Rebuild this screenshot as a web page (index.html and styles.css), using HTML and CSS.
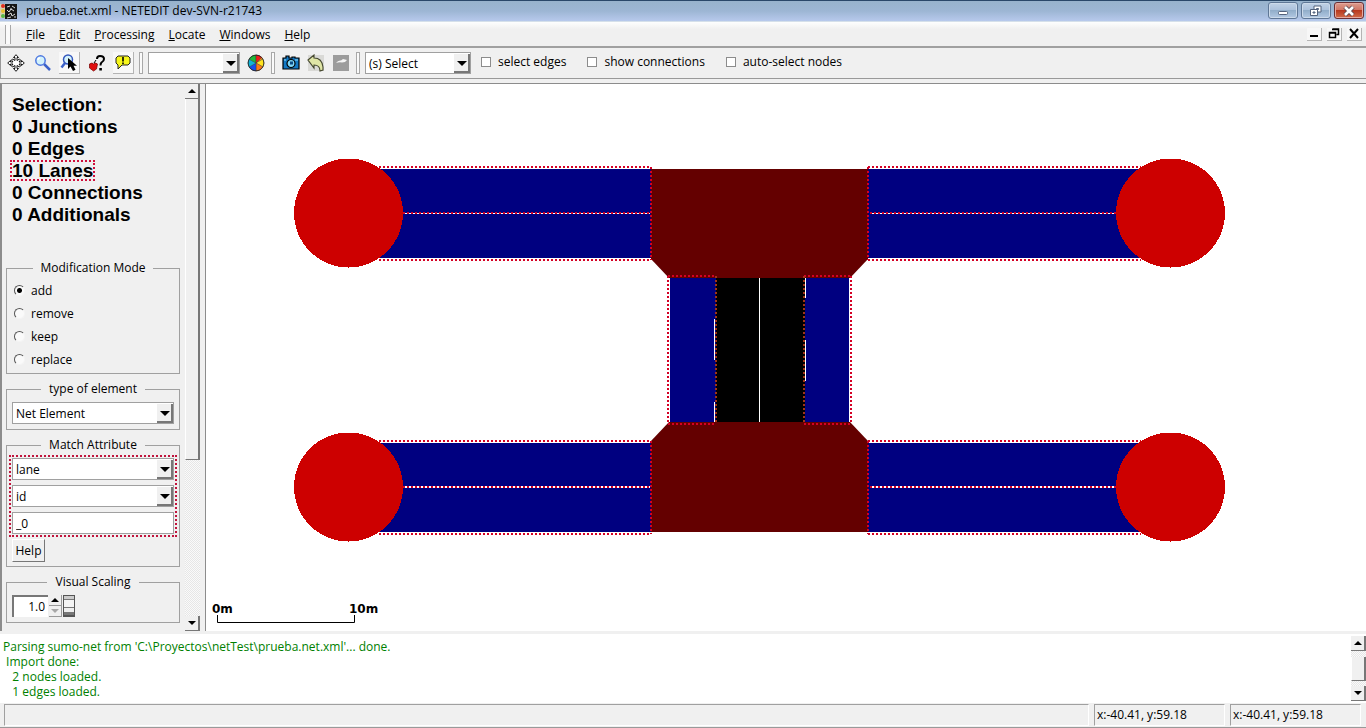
FILE: index.html
```html
<!DOCTYPE html>
<html lang="en">
<head>
<meta charset="utf-8">
<title>prueba.net.xml - NETEDIT dev-SVN-r21743</title>
<link rel="stylesheet" href="styles.css">
</head>
<body>
<header class="titlebar">
  <svg class="app-icon" width="18" height="18" viewBox="0 0 18 18" aria-hidden="true">
    <rect x="0" y="2" width="6" height="14" fill="#d8d0b0"/><circle cx="3" cy="4" r="2" fill="#e03020"/><circle cx="3" cy="9" r="2" fill="#e8c030"/><circle cx="3" cy="14" r="2" fill="#58b848"/>
    <rect x="5" y="2" width="12" height="15" fill="#151515"/>
    <path d="M7 5l3-1M12 4l3 2M7 8l2 2 2-3 3 2M8 13l3-2 1 3 3-2M7 16l4-1M14 15h2M11 6v2" stroke="#ddd" fill="none"/>
  </svg>
  <h1 class="title">prueba.net.xml - NETEDIT dev-SVN-r21743</h1>
  <div class="win-buttons">
    <button class="win-btn" aria-label="Minimize"><svg width="12" height="12" viewBox="0 0 12 12"><rect x="1.500" y="6.500" width="9" height="3" rx="1" fill="#fff" stroke="#53627c"/></svg></button>
    <button class="win-btn" aria-label="Restore"><svg width="14" height="12" viewBox="0 0 14 12"><path d="M5 1h7v6H5z" fill="#fff" stroke="#53627c"/><path d="M7.500 3.500h2v1h-2z" fill="#9fb6d2" stroke="#53627c"/><path d="M1.500 4.500h7v6h-7z" fill="#fff" stroke="#53627c"/><path d="M4 7h2v1H4z" fill="#9fb6d2" stroke="#53627c"/></svg></button>
    <button class="win-btn close" aria-label="Close"><svg width="14" height="12" viewBox="0 0 14 12"><path d="M3 2l8 8M11 2l-8 8" stroke="#5c4a52" stroke-width="4.500"/><path d="M3 2l8 8M11 2l-8 8" stroke="#fff" stroke-width="2.600"/></svg></button>
  </div>
</header>

<nav class="menubar">
  <span class="grip"></span>
  <div class="menus">
    <button class="menu"><u>F</u>ile</button>
    <button class="menu"><u>E</u>dit</button>
    <button class="menu"><u>P</u>rocessing</button>
    <button class="menu"><u>L</u>ocate</button>
    <button class="menu"><u>W</u>indows</button>
    <button class="menu"><u>H</u>elp</button>
  </div>
  <div class="mdi">
    <button class="mdi-btn" aria-label="Minimize view"><svg width="14" height="13" viewBox="0 0 14 13"><path d="M3 9h8" stroke="#000" stroke-width="2"/></svg></button>
    <button class="mdi-btn" aria-label="Restore view"><svg width="14" height="13" viewBox="0 0 14 13"><path d="M5.500 2h6v5.500h-2M5 2.500h7M2.500 5.500h6v5h-6zM2 6h7" fill="none" stroke="#000" stroke-width="1.500"/></svg></button>
    <button class="mdi-btn" aria-label="Close view"><svg width="14" height="13" viewBox="0 0 14 13"><path d="M3 2l8 9M11 2l-8 9" stroke="#000" stroke-width="2"/></svg></button>
  </div>
</nav>

<div class="toolbar">
  <div class="tools wide">
    <button class="tool" aria-label="Recenter view"><svg width="18" height="18" viewBox="0 0 18 18"><path d="M9 .7l2.500 2.800H10v3l2.500-1.500 1 1-1.500 2h2.500V6.500L17.300 9l-2.800 2.500V10H12l1.500 2-1 1L10 11.500v3h1.500L9 17.300l-2.500-2.800H8v-3L5.500 13l-1-1L6 10H3.500v1.500L.7 9l2.800-2.500V8H6L4.500 6l1-1L8 6.500v-3H6.500z" fill="#fff" stroke="#000" stroke-width=".9"/></svg></button>
    <button class="tool" aria-label="Edit viewport"><svg width="18" height="18" viewBox="0 0 18 18"><path d="M10 10l6 6" stroke="#3c62c8" stroke-width="2.500"/><circle cx="6.500" cy="6.500" r="4.700" fill="#d3f2fb" stroke="#4e78e0" stroke-width="1.500"/><path d="M4 6q0-2 2-2" stroke="#fff" fill="none" stroke-width="1.500"/></svg></button>
    <button class="tool raised" aria-label="Zoom style"><svg width="18" height="18" viewBox="0 0 18 18"><path d="M5 9l-3.500 4.500" stroke="#3c62c8" stroke-width="2.500"/><circle cx="8" cy="5.500" r="4.500" fill="#d3f2fb" stroke="#3557bd" stroke-width="1.500"/><path d="M8 4v11l2.500-2.500L13 17l2.500-1.200-2-4H17z" fill="#000"/></svg></button>
    <button class="tool" aria-label="Help tooltips"><svg width="18" height="18" viewBox="0 0 18 18"><path d="M9 5q0-3 3-3 4 0 4 3 0 2-2.500 3.500-1 1-1 3" fill="none" stroke="#000" stroke-width="2"/><path d="M11.300 14h2.600v2.500h-2.600z"/><path d="M1.500 10q3-2 4 0 2-2 4 0l-1 5-3 2-4-3z" fill="#e01010" stroke="#700" stroke-width=".7"/><path d="M6 9l2-3" stroke="#000"/></svg></button>
    <button class="tool raised" aria-label="Show messages"><svg width="18" height="18" viewBox="0 0 18 18"><path d="M4 2h10l2 2v5l-2 2H8l-4 4v-4l-2-2V4z" fill="#f6f619" stroke="#222"/><path d="M9 3v4.500M9 8.500v1.500" stroke="#000" stroke-width="1.600"/></svg></button>
  </div>
  <span class="grip tall"></span>
  <span class="combo view-combo"><select aria-label="Coloring scheme"><option></option></select></span>
  <button class="tool" aria-label="Edit coloring"><svg width="18" height="18" viewBox="0 0 18 18"><g stroke="#333" stroke-width=".4"><path d="M9 9V1a8 8 0 0 1 6.900 4z" fill="#ff9414"/><path d="M9 9l6.900-4a8 8 0 0 1 0 8z" fill="#ffe420"/><path d="M9 9l6.900 4A8 8 0 0 1 9 17z" fill="#ff7a18"/><path d="M9 9v8a8 8 0 0 1-6.900-4z" fill="#1650ee"/><path d="M9 9l-6.900 4a8 8 0 0 1 0-8z" fill="#12b4d8"/><path d="M9 9L2.100 5A8 8 0 0 1 9 1z" fill="#20b83a"/><path d="M9 9V1a8 8 0 0 1 5.700 2.300z" fill="#ee1c1c"/></g><circle cx="9" cy="9" r="7.900" fill="none" stroke="#222" stroke-width=".8"/></svg></button>
  <span class="grip tall"></span>
  <div class="tools">
    <button class="tool" aria-label="Snapshot"><svg width="18" height="18" viewBox="0 0 18 18"><path d="M1 4h3V2h3v2h3V3h3v1h4v11H1z" fill="#1379c4" stroke="#000" stroke-width="1.200"/><path d="M2 6h2M13 6h3" stroke="#8ce0ff"/><circle cx="9" cy="9.500" r="4" fill="#80d8f8" stroke="#000" stroke-width="1.200"/><path d="M8 7.500h3v3H8z" fill="#0c4d88"/></svg></button>
    <button class="tool" aria-label="Undo"><svg width="18" height="18" viewBox="0 0 18 18"><path d="M1 1h16v16H1z" fill="#d9d9d6"/><path d="M1 6l6-5v3q8 0 9 9v3l-3 1q0-6-6-6v3z" fill="#dfe5a6" stroke="#44472f" stroke-width="1.100"/></svg></button>
    <button class="tool" aria-label="Redo" disabled><svg width="18" height="18" viewBox="0 0 18 18"><path d="M1 1h16v16H1z" fill="#9c9c9c"/><path d="M4 9q2-3 5-2.500L11 5l4 1-2 2-3 .5q-3-.5-6 .5z" fill="#f4f4f4"/></svg></button>
  </div>
  <span class="grip tall"></span>
  <span class="combo mode-combo"><select aria-label="Edit mode"><option>(s) Select</option></select></span>
  <div class="checks">
    <label class="check"><input type="checkbox">select edges</label>
    <label class="check"><input type="checkbox">show connections</label>
    <label class="check"><input type="checkbox">auto-select nodes</label>
  </div>
</div>

<main class="workspace">
  <aside class="sidebar">
    <div class="panel">
      <ul class="selection">
        <li>Selection:</li>
        <li>0 Junctions</li>
        <li>0 Edges</li>
        <li><span class="marked">10 Lanes</span></li>
        <li>0 Connections</li>
        <li>0 Additionals</li>
      </ul>
      <fieldset class="group modes">
        <legend>Modification Mode</legend>
        <label class="radio"><input type="radio" name="mode" checked>add</label>
        <label class="radio"><input type="radio" name="mode">remove</label>
        <label class="radio"><input type="radio" name="mode">keep</label>
        <label class="radio"><input type="radio" name="mode">replace</label>
      </fieldset>
      <fieldset class="group">
        <legend>type of element</legend>
        <span class="combo"><select aria-label="Type of element"><option>Net Element</option></select></span>
      </fieldset>
      <fieldset class="group match">
        <legend>Match Attribute</legend>
        <div class="match-fields">
          <span class="combo"><select aria-label="Element"><option>lane</option></select></span>
          <span class="combo"><select aria-label="Attribute"><option>id</option></select></span>
          <input class="text" type="text" value="_0" aria-label="Match expression">
        </div>
        <button class="help">Help</button>
      </fieldset>
      <fieldset class="group">
        <legend>Visual Scaling</legend>
        <div class="scaling">
          <input class="number" type="text" value="1.0" aria-label="Scale factor">
          <div class="spin">
            <button class="spin-btn" aria-label="Increase"><i class="arrow up"></i></button>
            <button class="spin-btn" aria-label="Decrease" disabled><i class="arrow down"></i></button>
          </div>
          <div class="wheel"></div>
        </div>
      </fieldset>
    </div>
    <div class="scroll">
      <button class="scroll-btn" aria-label="Scroll panel up"><i class="arrow up"></i></button>
      <div class="thumb side-thumb"></div>
      <div class="track"></div>
      <button class="scroll-btn" aria-label="Scroll panel down"><i class="arrow down"></i></button>
    </div>
  </aside>
  <section class="canvas">
    <svg class="network" viewBox="206 84 1160 547" role="img" aria-label="Road network">
      <g fill="#000080">
        <path d="M349 169h302v89H349zM868 169h302v89H868zM349 443h302v89H349zM868 443h302v89H868z"/>
        <path d="M670 276h46v147h-46zM805 276h44v147h-44z"/>
      </g>
      <path d="M716 276h89v148h-89z" fill="#000"/>
      <g fill="#640000">
        <path d="M651 169h217v90l-18 19H669l-18-19z"/>
        <path d="M669 422h181l18 19v91H651v-91z"/>
      </g>
      <g fill="#fff" shape-rendering="crispEdges">
        <path d="M759 278h1v144h-1zM714 319h1v41h-1zM714 402h1v20h-1zM805 278h1v20h-1zM805 340h1v41h-1z"/>
        <path d="M380 213h270v1H380zM870 213h270v1H870zM380 486h270v2H380zM870 486h270v2H870z"/>
      </g>
      <g fill="none" stroke="#d40024" stroke-width="2" stroke-dasharray="2 2" shape-rendering="crispEdges">
        <path d="M379 167h272M379 260h272M868 167h273M868 260h273M379 441h272M379 534h272M868 441h273M868 534h273"/>
        <path d="M379 213h272M870 213h270M379 487h272M870 487h270"/>
        <path d="M651 167v93M868 167v93M651 441v93M868 441v93"/>
        <path d="M668 276v148M851 276v148M668 276h48M804 276h47M668 424h48M804 424h47"/>
        <path d="M716 276v148M804 276v148" stroke="#a03418"/>
      </g>
      <g fill="#cd0000" shape-rendering="crispEdges">
        <circle cx="348.500" cy="213" r="54.500"/><circle cx="1170.500" cy="213" r="54.500"/>
        <circle cx="348.500" cy="487" r="54.500"/><circle cx="1170.500" cy="487" r="54.500"/>
      </g>
      <path d="M217.500 615v7.500h137V615" fill="none" stroke="#000"/>
      <text class="scale" x="212" y="613">0m</text>
      <text class="scale" x="349" y="613">10m</text>
    </svg>
  </section>
</main>

<section class="messages">
  <pre class="log">Parsing sumo-net from 'C:\Proyectos\netTest\prueba.net.xml'... done.
 Import done:
   2 nodes loaded.
   1 edges loaded.</pre>
  <div class="scroll">
    <button class="scroll-btn" aria-label="Scroll messages up"><i class="arrow up"></i></button>
    <div class="track"></div>
    <div class="thumb log-thumb"></div>
    <div class="track"></div>
    <button class="scroll-btn" aria-label="Scroll messages down"><i class="arrow down"></i></button>
  </div>
</section>

<footer class="statusbar">
  <div class="status main-status"></div>
  <div class="status">x:-40.41, y:59.18</div>
  <div class="status">x:-40.41, y:59.18</div>
</footer>
</body>
</html>
```
FILE: styles.css
```css
* { box-sizing: border-box; }

body {
  margin: 0;
  height: 100vh;
  display: flex;
  flex-direction: column;
  overflow: hidden;
  background: #f0f0f0;
  color: #000;
  font: 12px/16px "Open Sans", "Noto Sans", sans-serif;
}

button, input, select { font: inherit; color: inherit; margin: 0; padding: 0; border-radius: 0; }
button { background: none; border: 0; display: flex; align-items: center; justify-content: center; }
svg { display: block; flex: none; }

/* Title bar */
.titlebar {
  flex: none;
  display: flex;
  align-items: center;
  height: 22px;
  border-top: 1px solid #2a4869;
  border-bottom: 1px solid #d5e0ea;
  background: linear-gradient(#98b3cc, #9db6d4 50%, #b7c9ec);
}
.title { flex: 1; margin: 0 0 0 8px; font-size: 12px; font-weight: 400; }
.win-buttons { display: flex; gap: 3px; align-self: flex-start; padding: 1px 2px 0 0; }
.win-btn {
  width: 30px;
  height: 17px;
  border: 1px solid #5f7796;
  border-radius: 3px;
  background: linear-gradient(#c1d2e6, #aac0db 50%, #92aeca 50%, #b3c9e3);
  box-shadow: inset 0 0 0 1px #ccdaea;
}
.win-btn.close {
  border-color: #6c3036;
  background: linear-gradient(#dc9c8e, #d07362 50%, #b8391f 50%, #d26c4a);
  box-shadow: inset 0 0 0 1px #e5aaa0;
}

/* Menu bar */
.menubar {
  flex: none;
  display: flex;
  align-items: center;
  height: 26px;
  padding: 0 4px 0 5px;
  border-bottom: 2px solid #a0a0a0;
  background: linear-gradient(#fdfefe, #f0f0f0 30%);
}
.grip {
  flex: none;
  width: 6px;
  height: 19px;
  border: 1px solid #a8a8a8;
  border-width: 0 1px;
  background: #fafafa;
}
.grip.tall { width: 4px; height: 22px; border-width: 1px; }
.menus { flex: 1; display: flex; gap: 14px; padding: 2px 0 0 15px; }
.mdi { display: flex; gap: 5px; }
.mdi-btn { width: 15px; height: 13px; border: 1px solid #b4b4b4; border-width: 0 1px 1px 0; background: #f7f7f7; }

/* Toolbar */
.toolbar {
  flex: none;
  display: flex;
  align-items: center;
  height: 31px;
  padding-left: 4px;
  border-left: 1px solid #999;
  border-bottom: 1px solid #999;
}
.tools { display: flex; gap: 4px; }
.tools.wide { gap: 6px; }
.tool { width: 21px; height: 22px; }
.tool.raised { border: 1px solid #b4b4b4; border-width: 0 1px 1px 0; background: #f8f8f8; }
.toolbar .grip { margin: 0 5px; }
.combo { display: flex; position: relative; height: 22px; }
.combo select {
  flex: 1;
  min-width: 0;
  appearance: none;
  padding: 2px 20px 0 3px;
  border: 1px solid #a0a0a0;
  background: #fff;
}
.combo::before {
  content: "";
  position: absolute;
  inset: 2px 1px 1px auto;
  width: 14px;
  border: 1px solid #777;
  border-width: 0 2px 2px 0;
  background: #f0f0f0;
  pointer-events: none;
}
.combo::after {
  content: "";
  position: absolute;
  right: 4px;
  top: 9px;
  border: 5px solid transparent;
  border-top-color: #000;
  border-bottom: 0;
  pointer-events: none;
}
.view-combo { width: 92px; margin-right: 5px; }
.mode-combo { width: 106px; }
.checks { display: flex; gap: 21px; padding: 0 0 2px 10px; }
.check { display: flex; align-items: center; gap: 7px; }
.check input { appearance: none; width: 10px; height: 10px; border: 1px solid #8c8c8c; background: #fff; }

/* Workspace */
.workspace {
  flex: 1;
  min-height: 0;
  display: flex;
  margin-top: 4px;
  border-top: 1px solid #8c8c8c;
}
.sidebar { flex: none; display: flex; width: 206px; padding-right: 5px; border: 1px solid #8c8c8c; border-width: 0 1px 0 2px; }
.panel { flex: 1; padding: 10px 5px 0 4px; overflow: hidden; }
.selection {
  margin: 0 0 34px;
  padding: 0 0 0 6px;
  list-style: none;
  font: bold 19px/22px "Liberation Sans", Arial, sans-serif;
}
.marked { margin: 0 -2px; padding: 0 2px; outline: 2px dotted #d0103c; outline-offset: -2px; }
.group {
  min-width: 0;
  margin: 0 0 7px;
  padding: 5px;
  border: 1px solid #a0a0a0;
}
.group legend { margin: 0 auto; padding: 0 8px; }
.modes { padding: 3px 7px 2px; }
.radio { display: flex; align-items: center; gap: 6px; height: 23px; }
.radio input {
  appearance: none;
  width: 11px;
  height: 11px;
  border: 1px solid #555;
  border-color: #555 #f4f4f4 #f4f4f4 #555;
  border-radius: 50%;
  background: #fafafa;
}
.radio input:checked { background: radial-gradient(circle, #000 2px, #fafafa 3px); }
.match { padding: 2px 2px 4px; }
.match-fields { display: flex; flex-direction: column; gap: 5px; padding: 1px; border: 2px dotted #c0143c; }
.text { width: 100%; height: 22px; padding: 0 3px; border: 1px solid #a0a0a0; background: #fff; }
.help { width: 33px; height: 23px; margin: 2px 0 0 3px; border: 1px solid #777; border-color: #fff #777 #777 #fff; }
.scaling { display: flex; gap: 1px; height: 22px; }
.number { width: 36px; padding-right: 3px; border: 1px solid #777; border-width: 2px 0 0 2px; border-color: #777; background: #fff; text-align: right; }
.spin { display: flex; flex-direction: column; width: 13px; }
.spin-btn { flex: 1; border: 1px solid #999; border-width: 0 1px 1px 0; }
.spin-btn:disabled .arrow { opacity: 0.3; }
.wheel { width: 12px; border: 1px solid #555; border-bottom-width: 2px; background: linear-gradient(#ccc 3px, #777 3px 4px, #f4f4f4 4px 11px, #777 11px 12px, #eee 12px 16px, #777 16px); }

/* Scroll columns */
.scroll { flex: none; display: flex; flex-direction: column; width: 15px; }
.scroll-btn { flex: none; height: 15px; border: 1px solid #777; border-width: 0 2px 1px 0; background: #f0f0f0; }
.arrow { border: 4px solid transparent; }
.arrow.up { border-bottom-color: #000; border-top: 0; }
.arrow.down { border-top-color: #000; border-bottom: 0; }
.thumb { border: 1px solid #777; border-width: 0 2px 1px 1px; border-left-color: #fff; background: #f0f0f0; }
.track { flex: 1; background: repeating-conic-gradient(#e6e6e6 0 25%, #fafafa 0 50%) 0 0 / 2px 2px; }
.side-thumb { flex: none; height: 66%; }
.log-thumb { height: 24px; }

/* Network view */
.canvas { flex: 1; min-width: 0; background: #fff; }
.network { width: 100%; height: 100%; }
.scale { font: bold 12px "DejaVu Sans", sans-serif; }

/* Messages */
.messages { flex: none; display: flex; margin-top: 3px; background: #fff; }
.log { flex: 1; margin: 0; padding: 5px 3px 4px; font: 12px/15px "Open Sans", "Noto Sans", sans-serif; color: #008000; }
.messages .scroll { padding: 2px 0; }

/* Status bar */
.statusbar { flex: none; display: flex; gap: 5px; height: 25px; padding: 1px 5px 1px 4px; border-bottom: 1px solid #999; }
.status { width: 131px; padding: 2px; border: 1px solid #a0a0a0; border-right-color: #fff; border-bottom-color: #fff; }
.main-status { flex: 1; }
```
